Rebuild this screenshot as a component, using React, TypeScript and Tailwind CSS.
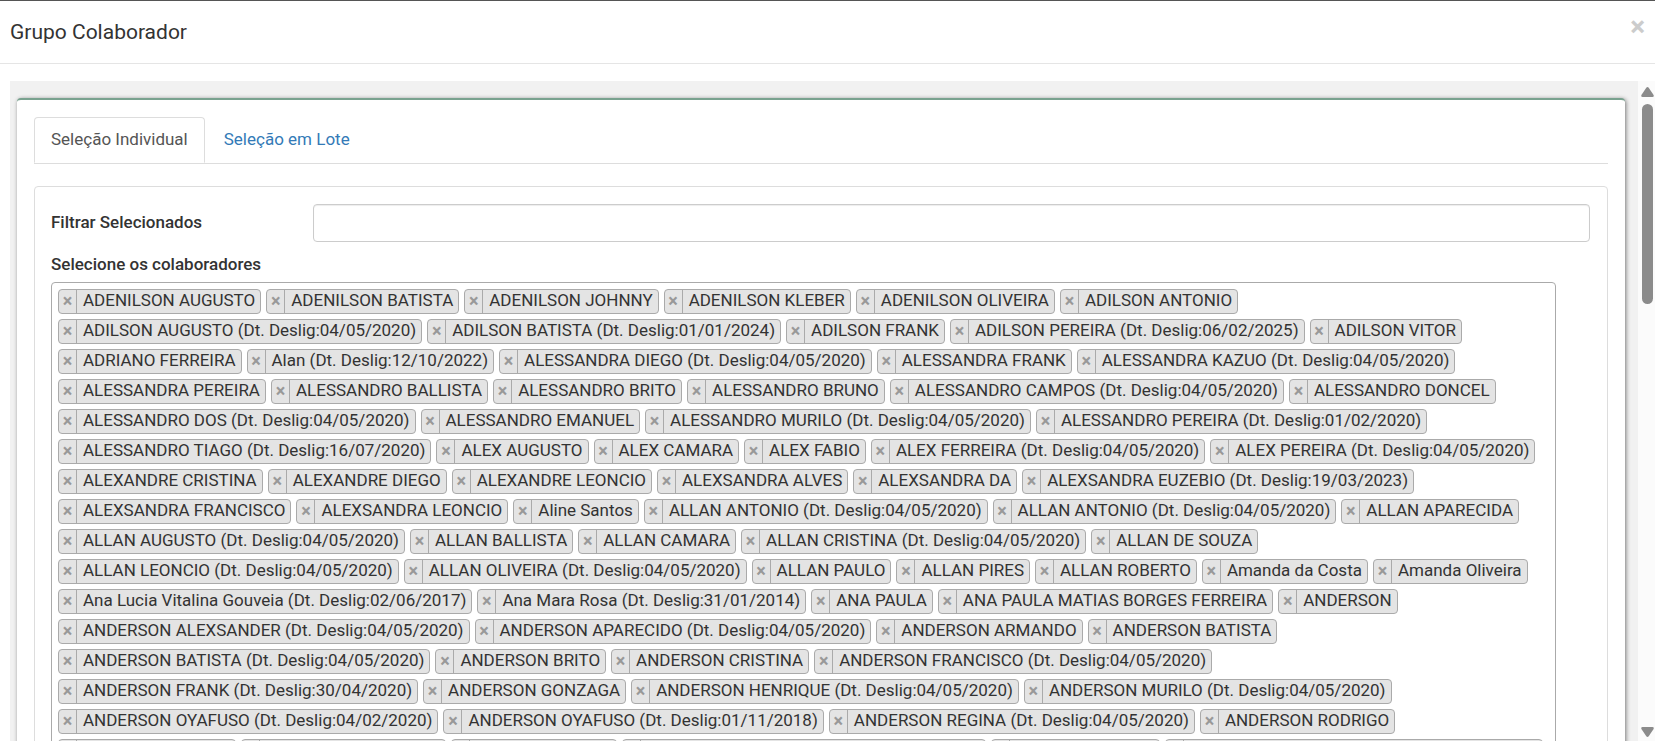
import { useId, useState } from "react";
import { cva } from "class-variance-authority";

const colaboradores: string[] = [
  "ADENILSON AUGUSTO",
  "ADENILSON BATISTA",
  "ADENILSON JOHNNY",
  "ADENILSON KLEBER",
  "ADENILSON OLIVEIRA",
  "ADILSON ANTONIO",
  "ADILSON AUGUSTO (Dt. Deslig:04/05/2020)",
  "ADILSON BATISTA (Dt. Deslig:01/01/2024)",
  "ADILSON FRANK",
  "ADILSON PEREIRA (Dt. Deslig:06/02/2025)",
  "ADILSON VITOR",
  "ADRIANO FERREIRA",
  "Alan (Dt. Deslig:12/10/2022)",
  "ALESSANDRA DIEGO (Dt. Deslig:04/05/2020)",
  "ALESSANDRA FRANK",
  "ALESSANDRA KAZUO (Dt. Deslig:04/05/2020)",
  "ALESSANDRA PEREIRA",
  "ALESSANDRO BALLISTA",
  "ALESSANDRO BRITO",
  "ALESSANDRO BRUNO",
  "ALESSANDRO CAMPOS (Dt. Deslig:04/05/2020)",
  "ALESSANDRO DONCEL",
  "ALESSANDRO DOS (Dt. Deslig:04/05/2020)",
  "ALESSANDRO EMANUEL",
  "ALESSANDRO MURILO (Dt. Deslig:04/05/2020)",
  "ALESSANDRO PEREIRA (Dt. Deslig:01/02/2020)",
  "ALESSANDRO TIAGO (Dt. Deslig:16/07/2020)",
  "ALEX AUGUSTO",
  "ALEX CAMARA",
  "ALEX FABIO",
  "ALEX FERREIRA (Dt. Deslig:04/05/2020)",
  "ALEX PEREIRA (Dt. Deslig:04/05/2020)",
  "ALEXANDRE CRISTINA",
  "ALEXANDRE DIEGO",
  "ALEXANDRE LEONCIO",
  "ALEXSANDRA ALVES",
  "ALEXSANDRA DA",
  "ALEXSANDRA EUZEBIO (Dt. Deslig:19/03/2023)",
  "ALEXSANDRA FRANCISCO",
  "ALEXSANDRA LEONCIO",
  "Aline Santos",
  "ALLAN ANTONIO (Dt. Deslig:04/05/2020)",
  "ALLAN ANTONIO (Dt. Deslig:04/05/2020)",
  "ALLAN APARECIDA",
  "ALLAN AUGUSTO (Dt. Deslig:04/05/2020)",
  "ALLAN BALLISTA",
  "ALLAN CAMARA",
  "ALLAN CRISTINA (Dt. Deslig:04/05/2020)",
  "ALLAN DE SOUZA",
  "ALLAN LEONCIO (Dt. Deslig:04/05/2020)",
  "ALLAN OLIVEIRA (Dt. Deslig:04/05/2020)",
  "ALLAN PAULO",
  "ALLAN PIRES",
  "ALLAN ROBERTO",
  "Amanda da Costa",
  "Amanda Oliveira",
  "Ana Lucia Vitalina Gouveia (Dt. Deslig:02/06/2017)",
  "Ana Mara Rosa (Dt. Deslig:31/01/2014)",
  "ANA PAULA",
  "ANA PAULA MATIAS BORGES FERREIRA",
  "ANDERSON",
  "ANDERSON ALEXSANDER (Dt. Deslig:04/05/2020)",
  "ANDERSON APARECIDO (Dt. Deslig:04/05/2020)",
  "ANDERSON ARMANDO",
  "ANDERSON BATISTA",
  "ANDERSON BATISTA (Dt. Deslig:04/05/2020)",
  "ANDERSON BRITO",
  "ANDERSON CRISTINA",
  "ANDERSON FRANCISCO (Dt. Deslig:04/05/2020)",
  "ANDERSON FRANK (Dt. Deslig:30/04/2020)",
  "ANDERSON GONZAGA",
  "ANDERSON HENRIQUE (Dt. Deslig:04/05/2020)",
  "ANDERSON MURILO (Dt. Deslig:04/05/2020)",
  "ANDERSON OYAFUSO (Dt. Deslig:04/02/2020)",
  "ANDERSON OYAFUSO (Dt. Deslig:01/11/2018)",
  "ANDERSON REGINA (Dt. Deslig:04/05/2020)",
  "ANDERSON RODRIGO",
  "ANDERSON SOUZA",
  "ANDERSON VERONICA",
  "ANDRE AUGUSTO",
  "ANDRE FRANCISCO (Dt. Deslig:04/05/2020)",
  "ANDRE GONZAGA",
  "ANDRE ALEXSANDER (Dt. Deslig:04/05/2020)",
];

type Tab = "individual" | "lote";

const tabStyles = cva(
  "mr-0.5 h-[46px] rounded-t border px-4 pb-0.5 leading-6",
  {
    variants: {
      active: {
        true: "-mb-px border-[#ddd] border-b-white bg-white text-[#555]",
        false: "border-transparent text-[#337ab7]",
      },
    },
  },
);

interface ChipProps {
  name: string;
  onRemove: () => void;
}

function Chip({ name, onRemove }: ChipProps) {
  return (
    <li className="flex h-[25px] items-stretch overflow-hidden rounded border border-[#aaa] bg-[#e4e4e4] whitespace-nowrap">
      <button
        type="button"
        aria-label={`Remover ${name}`}
        onClick={onRemove}
        className="w-[18px] border-r border-[#aaa] pb-0.5 text-lg leading-5 font-bold text-[#999]"
      >
        ×
      </button>
      <span className="pr-[5px] pl-1.5 leading-5">{name}</span>
    </li>
  );
}

function ScrollRail() {
  return (
    <div
      aria-hidden="true"
      className="flex w-[17px] shrink-0 flex-col items-center bg-[#fbfbfb] pt-1.5 pl-[2px]"
    >
      <svg width="13" height="10" viewBox="0 0 13 10" fill="#8b8b8b">
        <path d="M5.3 .7Q6.5-.6 7.7.7L12.6 8Q13.2 10 11.5 10H1.5Q-.2 10 .4 8Z" />
      </svg>
      <div className="mt-[7px] h-[200px] w-[11px] rounded-full bg-[#8b8b8b]" />
      <svg
        className="mt-auto mb-1"
        width="13"
        height="10"
        viewBox="0 0 13 10"
        fill="#8b8b8b"
      >
        <path d="M5.3 9.3Q6.5 10.6 7.7 9.3L12.6 2Q13.2 0 11.5 0H1.5Q-.2 0 .4 2Z" />
      </svg>
    </div>
  );
}

export default function App() {
  const filterId = useId();
  const listId = useId();
  const [tab, setTab] = useState<Tab>("individual");
  const [filter, setFilter] = useState("");
  const [selected, setSelected] = useState(colaboradores);

  const visible = selected
    .map((name, index) => ({ name, index }))
    .filter(({ name }) => name.toLowerCase().includes(filter.toLowerCase()));

  const remove = (index: number) =>
    setSelected((current) => current.filter((_, i) => i !== index));

  return (
    <div
      role="dialog"
      aria-label="Grupo Colaborador"
      className="flex h-screen flex-col border-t border-[#555] bg-white font-['Roboto',sans-serif] text-[17px] text-[#333]"
    >
      <header className="flex h-[63px] shrink-0 items-start justify-between border-b border-[#e5e5e5] px-2.5">
        <h4 className="pt-[17px] text-[21px] leading-7">Grupo Colaborador</h4>
        <button
          type="button"
          aria-label="Fechar"
          className="pt-3 text-[28px] leading-7 font-bold text-[#ccc]"
        >
          ×
        </button>
      </header>

      <div className="flex min-h-0 flex-1 pt-[17px] pb-[7px] pl-2.5">
        <main className="min-w-0 flex-1 overflow-hidden bg-[#f1f1f1] pt-[17px] pr-[13px] pl-[7px]">
          <section className="rounded border-t-2 border-[#79a28f] bg-white px-[17px] pt-[17px] pb-5 shadow-[1px_1px_4px_#777]">
            <div role="tablist" className="flex border-b border-[#ddd]">
              <button
                type="button"
                role="tab"
                aria-selected={tab === "individual"}
                onClick={() => setTab("individual")}
                className={tabStyles({ active: tab === "individual" })}
              >
                Seleção Individual
              </button>
              <button
                type="button"
                role="tab"
                aria-selected={tab === "lote"}
                onClick={() => setTab("lote")}
                className={tabStyles({ active: tab === "lote" })}
              >
                Seleção em Lote
              </button>
            </div>

            <div className="mt-[22px] rounded border border-[#ddd] px-4 pt-[17px] pb-5">
              <div className="flex items-center">
                <label htmlFor={filterId} className="w-[262px] font-medium">
                  Filtrar Selecionados
                </label>
                <input
                  id={filterId}
                  type="text"
                  value={filter}
                  onChange={(e) => setFilter(e.target.value)}
                  className="mr-px h-[38px] min-w-0 flex-1 rounded border border-[#ccc] px-3 shadow-[inset_0_1px_1px_rgba(0,0,0,0.075)] outline-none"
                />
              </div>
              <h5 id={listId} className="mt-2.5 leading-6 font-medium">
                Selecione os colaboradores
              </h5>
              <ul
                aria-labelledby={listId}
                className="mt-1.5 mr-[35px] flex flex-wrap gap-[5px] rounded border border-[#aaa] p-1.5"
              >
                {visible.map(({ name, index }) => (
                  <Chip
                    key={index}
                    name={name}
                    onRemove={() => remove(index)}
                  />
                ))}
              </ul>
            </div>
          </section>
        </main>
        <ScrollRail />
      </div>
    </div>
  );
}
